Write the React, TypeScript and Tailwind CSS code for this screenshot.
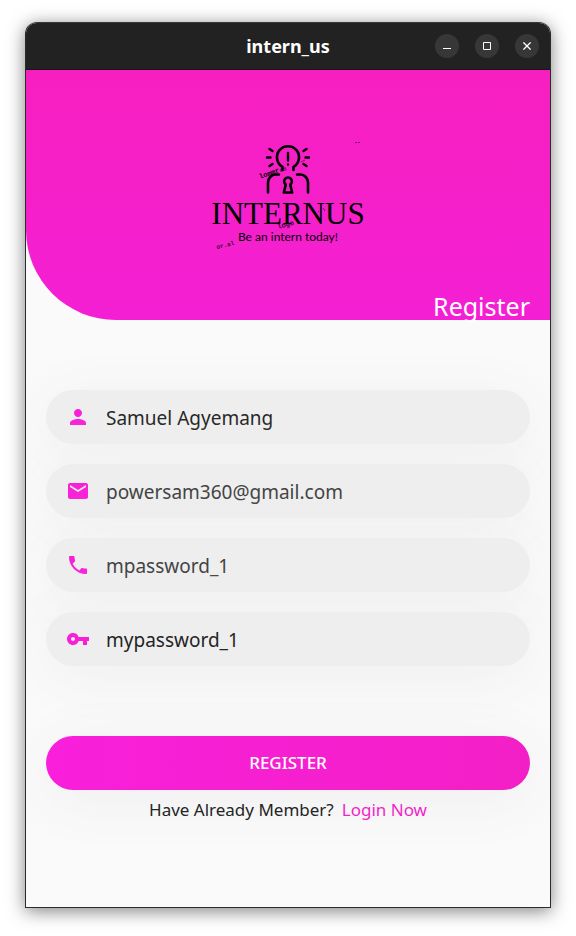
import { MdEmail, MdPerson, MdPhone, MdVpnKey } from "react-icons/md";
import type { IconType } from "react-icons";

type Field = {
  id: string;
  label: string;
  type: string;
  value: string;
  tone: string;
  Icon: IconType;
};

const fields: Field[] = [
  { id: "name", label: "Full name", type: "text", value: "Samuel Agyemang", tone: "text-[#242424]", Icon: MdPerson },
  { id: "email", label: "Email", type: "email", value: "powersam360@gmail.com", tone: "text-[#404040]", Icon: MdEmail },
  { id: "phone", label: "Phone number", type: "text", value: "mpassword_1", tone: "text-[#404040]", Icon: MdPhone },
  { id: "password", label: "Password", type: "text", value: "mypassword_1", tone: "text-[#242424]", Icon: MdVpnKey },
];

const windowButton =
  "flex size-6 items-center justify-center rounded-full bg-[#373737] text-white";

function TitleBar() {
  return (
    <div className="grid h-[47px] grid-cols-[1fr_auto_1fr] items-center border-b border-[#151515] bg-[#222222] px-[11px]">
      <span />
      <span className="text-lg leading-6 font-bold text-white">intern_us</span>
      <div className="flex justify-end gap-4">
        <button type="button" aria-label="Minimize" className={windowButton}>
          <svg width="8" height="8" viewBox="0 0 8 8" aria-hidden="true">
            <path d="M0 6.5h8" stroke="currentColor" />
          </svg>
        </button>
        <button type="button" aria-label="Maximize" className={windowButton}>
          <svg width="8" height="8" viewBox="0 0 8 8" aria-hidden="true">
            <path d="M.5.5h7v7h-7z" fill="none" stroke="currentColor" />
          </svg>
        </button>
        <button type="button" aria-label="Close" className={windowButton}>
          <svg width="8" height="8" viewBox="0 0 8 8" aria-hidden="true">
            <path d="M.4.4l7.2 7.2M7.6.4L.4 7.6" stroke="currentColor" strokeWidth="1.3" />
          </svg>
        </button>
      </div>
    </div>
  );
}

function Logo() {
  return (
    <svg width="180" height="130" viewBox="198 130 180 130" role="img" aria-label="Internus logo">
      <g fill="none" stroke="#000" strokeWidth="2.6" strokeLinecap="round" strokeLinejoin="round">
        {/* bulb and its exclamation mark */}
        <path d="M282.5 170v-3.200a11 11 0 1 1 11 0v3.200" />
        <path d="M288 153v7.500M288 164.500v.1" strokeWidth="2.4" />
        {/* rays */}
        <path
          d="M267 157.500h3.500M305.500 157.500h3.500M269.500 149l3 2M306.500 149l-3 2M269.500 166l3-2M306.500 166l-3-2"
          strokeWidth="2.4"
        />
        {/* shoulders */}
        <path d="M279 174.500h-3.500a8 8 0 0 0-7.500 8V192.500M297 174.500h3.500a8 8 0 0 1 7.500 8V192.500" />
        {/* keyhole */}
        <path d="M285.800 184.600a3.900 3.900 0 1 1 4.400 0l2 7.900h-8.400z" strokeWidth="2.6" />
      </g>
      <g fontFamily="Liberation Mono, monospace" fill="#000" fontWeight="bold">
        <text x="260" y="179" fontSize="7" transform="rotate(-20 260 179)">lommr</text>
        <text x="280" y="172" fontSize="6" opacity=".7" transform="rotate(-15 280 172)">as</text>
        <text x="278" y="229" fontSize="7" opacity=".8" transform="rotate(-15 278 229)">logo</text>
        <text x="217" y="249" fontSize="6" opacity=".8" transform="rotate(-14 217 249)">or.al</text>
      </g>
      <path d="M355 142.500h2M358 142.500h2M323 208l2 3M318 212l1-1M301 162l4-2" stroke="#000" strokeWidth="1" opacity=".5" />
      <text x="288" y="224" textAnchor="middle" fontSize="31" fontFamily="Liberation Serif, serif" fill="#000">
        INTERNUS
      </text>
      <text x="288" y="241" textAnchor="middle" fontSize="12" fontFamily="Lato, sans-serif" fill="#000">
        Be an intern today!
      </text>
    </svg>
  );
}

export default function App() {
  return (
    <div className="flex min-h-screen flex-col bg-white px-[25px] pt-[22px] pb-7 font-['Noto_Sans',sans-serif]">
      <div className="flex flex-1 flex-col overflow-hidden rounded-t-xl border border-[#2b2b2b] border-t-[#383838] bg-[#fafafa] shadow-[0_3px_18px_rgba(0,0,0,0.5)]">
        <TitleBar />
        <header className="flex h-[250px] flex-col items-center justify-between rounded-bl-[90px] bg-linear-to-b from-[#f71fbf] to-[#f41fd4] pt-[60px]">
          <Logo />
          <h1 className="self-end pr-5 text-[25px] leading-7 text-white">Register</h1>
        </header>
        <form className="flex flex-col gap-5 px-5 pt-[70px]" onSubmit={(e) => e.preventDefault()}>
          {fields.map(({ id, label, type, value, tone, Icon }) => (
            <label
              key={id}
              htmlFor={id}
              className="flex h-[54px] items-center gap-4 rounded-full bg-[#eeeeee] px-5 shadow-[0_10px_58px_#eeeeee]"
            >
              <Icon size={24} className="shrink-0 text-[#f81fd8]" aria-hidden="true" />
              <input
                id={id}
                type={type}
                aria-label={label}
                defaultValue={value}
                className={`min-w-0 flex-1 bg-transparent pt-px text-[19px] leading-7 outline-none ${tone}`}
              />
            </label>
          ))}
          <button
            type="submit"
            className="mt-[50px] h-[54px] rounded-full bg-linear-to-r from-[#f91fdb] to-[#f31fc6] text-[17px] font-medium text-white shadow-[0_10px_58px_#eeeeee]"
          >
            REGISTER
          </button>
        </form>
        <p className="mt-2 flex justify-center gap-2 text-[17px] leading-6 text-[#242424]">
          <span>Have Already Member?</span>
          <a href="#login" className="text-[#f41fca]">
            Login Now
          </a>
        </p>
      </div>
    </div>
  );
}
